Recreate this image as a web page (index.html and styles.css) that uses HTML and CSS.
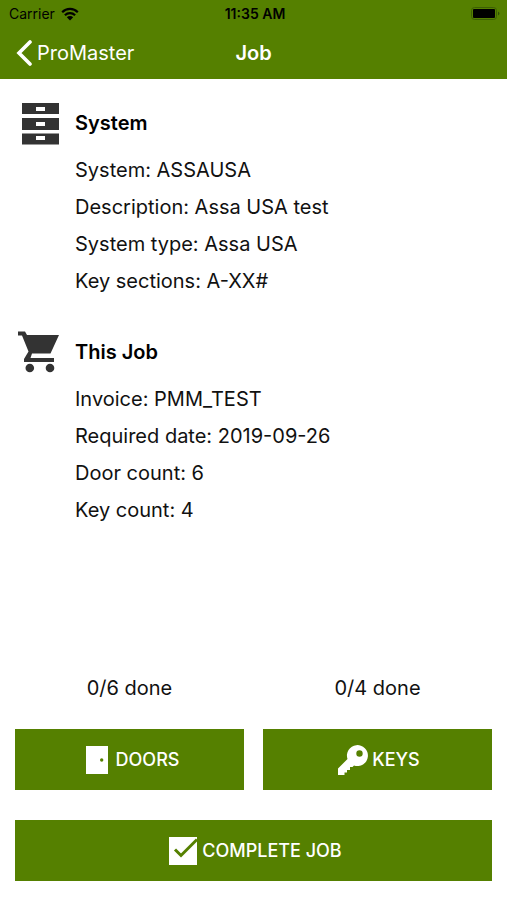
FILE: index.html
```html
<!DOCTYPE html>
<html lang="en">
<head>
<meta charset="utf-8">
<meta name="viewport" content="width=device-width, initial-scale=1">
<title>Job</title>
<link rel="stylesheet" href="styles.css">
</head>
<body>
<div class="app">
  <header class="header">
    <div class="status">
      <span class="carrier">Carrier
        <svg class="wifi" viewBox="0 0 18 14" aria-hidden="true">
          <path d="M1.2 5.2a11 11 0 0 1 15.6 0M3.9 8.2a7.2 7.2 0 0 1 10.2 0" fill="none" stroke="currentColor" stroke-width="2.2"/>
          <path d="M9 13.5 5.8 10.2a4.6 4.6 0 0 1 6.4 0z"/>
        </svg>
      </span>
      <span class="clock">11:35 AM</span>
      <svg class="battery" viewBox="0 0 30 14" aria-hidden="true">
        <rect x=".5" y=".5" width="25" height="12" rx="3" fill="none" stroke="#3c5f04"/>
        <rect x="2" y="2" width="22" height="9" rx="1"/>
        <path d="M27 4.5q3 2 0 4z" fill="#304f05"/>
      </svg>
    </div>
    <nav class="nav">
      <a class="back" href="#">
        <svg class="chevron" viewBox="0 0 16 26" aria-hidden="true"><path d="M14 2 3 13l11 11" fill="none" stroke="currentColor" stroke-width="3.6" stroke-linecap="round"/></svg>
        ProMaster
      </a>
      <h1 class="title">Job</h1>
    </nav>
  </header>

  <main class="content">
    <section class="group">
      <svg class="group-icon" viewBox="0 0 44 44" aria-hidden="true">
        <path fill-rule="evenodd" d="M4 2h37v11H4zM18 6v4h9V6zM4 17h37v12H4zM18 21v4h9v-4zM4 32.500h37v11H4zM18 35v4h9v-4z"/>
      </svg>
      <h2 class="group-title">System</h2>
      <ul class="facts">
        <li>System: ASSAUSA</li>
        <li>Description: Assa USA test</li>
        <li>System type: Assa USA</li>
        <li>Key sections: A-XX#</li>
      </ul>
    </section>
    <section class="group">
      <svg class="group-icon" viewBox="0 0 44 44" aria-hidden="true">
        <path d="M0 1.500h7l2 3.500h32L32.500 23.500H14L12.500 28H36v4H6v-3l4.500-7.500L4 5.500H0z"/>
        <circle cx="11.800" cy="38" r="4.300"/><circle cx="32" cy="38" r="4.300"/>
      </svg>
      <h2 class="group-title">This Job</h2>
      <ul class="facts">
        <li>Invoice: PMM_TEST</li>
        <li>Required date: 2019-09-26</li>
        <li>Door count: 6</li>
        <li>Key count: 4</li>
      </ul>
    </section>
  </main>

  <footer class="actions">
    <div class="action">
      <p class="progress">0/6 done</p>
      <button class="button doors" type="button">
        <svg class="door-icon" viewBox="0 0 22 28" aria-hidden="true"><path fill-rule="evenodd" d="M0 0h22v28H0zM14 14a1.700 1.700 0 1 0 3.400 0a1.700 1.700 0 1 0-3.400 0z"/></svg>
        DOORS
      </button>
    </div>
    <div class="action">
      <p class="progress">0/4 done</p>
      <button class="button" type="button">
        <svg class="button-icon" viewBox="0 0 30 30" aria-hidden="true"><path fill-rule="evenodd" d="M0 23.500 9.500 14A10.500 10.500 0 1 1 16 20.500L14.500 22H12v3H9v2.500H6.500V30H0zM18.300 8.500a3.200 3.200 0 1 0 6.400 0a3.200 3.200 0 1 0-6.400 0z"/></svg>
        KEYS
      </button>
    </div>
    <button class="button complete" type="button">
      <svg class="button-icon" viewBox="0 0 30 30" aria-hidden="true"><path d="M1 1h28v28H1z"/><path d="M7 13.500 13 19.500 29 3.500" fill="none" stroke="#558000" stroke-width="3"/></svg>
      COMPLETE JOB
    </button>
  </footer>
</div>
</body>
</html>
```
FILE: styles.css
```css
* {
  box-sizing: border-box;
}

body {
  margin: 0;
  background: #fff;
  color: #111;
  font: 20px/37px Inter, "Liberation Sans", sans-serif;
}

h1, h2, p, ul {
  margin: 0;
  padding: 0;
}

svg {
  flex: none;
  fill: currentColor;
}

.app {
  display: flex;
  flex-direction: column;
  min-height: 100vh;
}

.header {
  background: #558000;
}

.status {
  display: grid;
  grid-template-columns: 1fr auto 1fr;
  align-items: center;
  height: 27px;
  padding: 0 6px 0 9px;
  color: #000;
  font-size: 14px;
  line-height: 20px;
}

.carrier {
  display: flex;
  align-items: center;
  gap: 6px;
}

.wifi {
  width: 18px;
  height: 14px;
}

.clock {
  font-size: 15px;
  font-weight: 600;
}

.battery {
  width: 30px;
  height: 14px;
  justify-self: end;
}

.clock {
  font-size: 14px;
}

.nav {
  display: grid;
  grid-template-columns: 1fr auto 1fr;
  align-items: center;
  height: 52px;
  padding: 0 16px;
  color: #fff;
}

.back {
  display: flex;
  align-items: center;
  gap: 5px;
  color: inherit;
  text-decoration: none;
}

.chevron {
  width: 16px;
  height: 26px;
}

.title {
  font-size: 20px;
  font-weight: 600;
}

.content {
  display: flex;
  flex: 1;
  flex-direction: column;
  gap: 30px;
  padding: 22px 18px;
}

.group {
  display: grid;
  grid-template-columns: 44px 1fr;
  column-gap: 13px;
  row-gap: 7px;
  align-items: center;
}

.group-icon {
  width: 44px;
  height: 44px;
  color: #333;
}

.group-title {
  color: #000;
  font-size: 20px;
  font-weight: 600;
}

.facts {
  grid-column: 2;
  list-style: none;
}

.actions {
  display: grid;
  grid-template-columns: 1fr 1fr;
  column-gap: 19px;
  row-gap: 30px;
  padding: 0 15px 19px;
}

.progress {
  margin-bottom: 22px;
  text-align: center;
}

.button {
  display: flex;
  align-items: center;
  justify-content: center;
  gap: 4px;
  width: 100%;
  height: 61px;
  border: 0;
  padding: 0 0 0 3px;
  background: #558000;
  color: #fff;
  font: 500 18px/24px Inter, "Liberation Sans", sans-serif;
}

.doors {
  gap: 8px;
  padding-left: 6px;
}

.complete {
  grid-column: 1 / -1;
}

.button-icon {
  width: 30px;
  height: 30px;
}

.door-icon {
  width: 22px;
  height: 28px;
}
```
